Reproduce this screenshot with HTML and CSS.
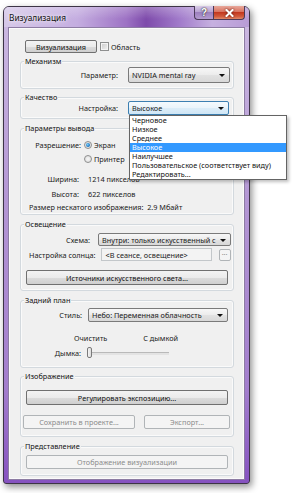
FILE: index.html
```html
<!DOCTYPE html>
<html lang="ru">
<head>
<meta charset="utf-8">
<link rel="stylesheet" href="styles.css">
</head>
<body>
<div class="window">
  <div class="titlebar">
    <span class="title">Визуализация</span>
    <div class="caption-btns">
      <div class="cbtn help">?</div>
      <div class="cbtn close"><svg width="9" height="8" viewBox="0 0 9 8"><path d="M1.5 1 L7.5 7 M7.5 1 L1.5 7" stroke="#fff" stroke-width="2" stroke-linecap="square"/></svg></div>
    </div>
  </div>
  <div class="client">
    <div class="toprow">
      <div class="btn btn-main">Визуализация</div>
      <span class="checkbox"></span><span class="cb-label">Область</span>
    </div>

    <div class="group g-mech">
      <div class="legend">Механизм</div>
      <div class="row r-param">
        <span class="lbl w98">Параметр:</span>
        <div class="combo c-param">NVIDIA mental ray<span class="arrow"></span></div>
      </div>
    </div>

    <div class="group g-qual">
      <div class="legend">Качество</div>
      <div class="row r-qual">
        <span class="lbl w98">Настройка:</span>
        <div class="combo focus c-qual">Высокое<span class="arrow"></span></div>
      </div>
    </div>

    <div class="group g-out">
      <div class="legend">Параметры вывода</div>
      <div class="row r-res">
        <span class="lbl w60">Разрешение:</span>
        <span class="radio on"></span><span>Экран</span>
      </div>
      <div class="row r-prn">
        <span class="lbl w60"></span>
        <span class="radio"></span><span>Принтер</span>
      </div>
      <div class="row r-w">
        <span class="lbl w59">Ширина:</span>
        <span class="val">1214 пикселов</span>
      </div>
      <div class="row r-h">
        <span class="lbl w59">Высота:</span>
        <span class="val">622 пикселов</span>
      </div>
      <div class="row r-size">
        <span class="size">Размер нескатого изображения:&nbsp; 2.9 Мбайт</span>
      </div>
    </div>

    <div class="group g-light">
      <div class="legend">Освещение</div>
      <div class="row r-scheme">
        <span class="lbl w70">Схема:</span>
        <div class="combo c-scheme">Внутри: только искусственный с<span class="arrow"></span></div>
      </div>
      <div class="row r-sun">
        <span class="lbl sunlbl">Настройка солнца:</span>
        <div class="field">&lt;В сеансе, освещение&gt;</div>
        <div class="btn dis dots">...</div>
      </div>
      <div class="btn wide r-lights">Источники искусственного света...</div>
    </div>

    <div class="group g-bg">
      <div class="legend">Задний план</div>
      <div class="row r-style">
        <span class="lbl w62">Стиль:</span>
        <div class="combo c-style">Небо: Переменная облачность<span class="arrow"></span></div>
      </div>
      <div class="row r-ticks">
        <span class="t1">Очистить</span><span class="t2">С дымкой</span>
      </div>
      <div class="row r-haze">
        <span class="lbl w61">Дымка:</span>
        <div class="slider"><span class="thumb"></span></div>
      </div>
    </div>

    <div class="group g-img">
      <div class="legend">Изображение</div>
      <div class="btn wide r-exp">Регулировать экспозицию...</div>
      <div class="row r-save">
        <div class="btn dis b-save">Сохранить в проекте...</div>
        <div class="btn dis b-export">Экспорт...</div>
      </div>
    </div>

    <div class="group g-view">
      <div class="legend">Представление</div>
      <div class="btn dis wide r-view">Отображение визуализации</div>
    </div>
  </div>

  <ul class="dropdown">
    <li>Черновое</li>
    <li>Низкое</li>
    <li>Среднее</li>
    <li class="sel">Высокое</li>
    <li>Наилучшее</li>
    <li>Пользовательское (соответствует виду)</li>
    <li>Редактировать...</li>
  </ul>
</div>
</body>
</html>
```

FILE: styles.css
```css
* { box-sizing: border-box; }
html, body { margin: 0; padding: 0; background: #fff; }
body {
  font-family: "Noto Sans", "DejaVu Sans", sans-serif;
  font-size: 7.3px;
  color: #1a1a1a;
  width: 296px;
  height: 493px;
  overflow: hidden;
}

.window {
  position: relative;
  margin: 6px 0 0 3px;
  width: 247px;
  height: 478px;
  border: 1px solid #3d3446;
  border-radius: 6px 6px 3px 3px;
  background: linear-gradient(180deg, #cdbbe2 0%, #b497d4 40%, #a37ecd 80%, #8652c0 100%);
  box-shadow: 2px 3px 7px rgba(0,0,0,0.45);
}

.titlebar {
  height: 20px;
  display: flex;
  align-items: flex-start;
  justify-content: space-between;
  padding-left: 5px;
  background:
    linear-gradient(180deg, rgba(255,255,255,0.25) 0%, rgba(255,255,255,0) 60%),
    linear-gradient(90deg, #d6c8e8 0%, #c4ade0 30%, #9d72c4 50%, #7e4bab 58%, #a27ccb 72%, #c6b0e0 85%, #b89cd6 100%);
  border-radius: 5px 5px 0 0;
}
.title {
  margin-top: 5px;
  font-size: 8.3px;
  color: #111;
  text-shadow: 0 0 6px rgba(255,255,255,0.9), 0 0 3px rgba(255,255,255,0.9);
}
.caption-btns {
  display: flex;
  margin-right: 4px;
  margin-top: -1px;
}
.cbtn {
  height: 14px;
  display: flex;
  align-items: center;
  justify-content: center;
  border: 1px solid #4a3a58;
  border-top: none;
}
.help {
  width: 19px;
  border-radius: 0 0 0 4px;
  border-right: none;
  background: linear-gradient(180deg, #d9cce8 0%, #b8a2d2 45%, #9d80be 50%, #b49cd0 100%);
  color: #fff;
  font: bold 10px "Liberation Sans", sans-serif;
  text-shadow: 0 0 2px #333, 0 0 1px #222;
}
.close {
  width: 32px;
  border-radius: 0 0 4px 0;
  background: linear-gradient(180deg, #e8a89c 0%, #d9735f 45%, #c3381f 50%, #d25a3c 80%, #e08a6a 100%);
}
.close svg { filter: drop-shadow(0 0 1px #5a1005); }

.client {
  margin: 0 4px;
  height: 453px;
  background: #f0f0f0;
  border: 1px solid #8d7ca3;
  box-shadow: inset 0 0 0 1px #fbfbfb;
  padding: 0 10px 0 11px;
  display: flex;
  flex-direction: column;
}

.toprow {
  display: flex;
  align-items: center;
  margin: 12px 0 0 5px;
  height: 13px;
}
.btn {
  border: 1px solid #707070;
  border-radius: 2px;
  background: linear-gradient(180deg, #f3f3f3 0%, #ebebeb 50%, #dcdcdc 52%, #cfcfcf 100%);
  display: flex;
  align-items: center;
  justify-content: center;
  color: #111;
  white-space: nowrap;
}
.btn.dis {
  border-color: #b0b4b7;
  background: #f4f4f4;
  color: #8c8c8c;
}
.btn-main { width: 72px; height: 13px; }
.checkbox {
  width: 9px; height: 9px;
  margin-left: 3px;
  border: 1px solid #8e8f8f;
  background: linear-gradient(135deg, #c9c9c9 0%, #e2e2e2 60%, #f2f2f2 100%);
  box-shadow: inset 0 0 0 1px #f4f4f4;
}
.cb-label { margin-left: 2px; }

.group {
  border: 1px solid #d3d9de;
  border-radius: 3px;
  box-shadow: inset 0 0 0 1px #fafafa;
  display: flex;
  flex-direction: column;
  flex: none;
}
.legend {
  align-self: flex-start;
  height: 11px;
  line-height: 11px;
  margin: -6px 0 -5px 3px;
  padding: 0 1px;
  background: #f0f0f0;
  color: #111;
}
.row { display: flex; align-items: center; flex: none; }
.lbl { text-align: right; flex: none; white-space: nowrap; }
.w98 { width: 97px; margin-right: 10px; }
.w60 { width: 60px; margin-right: 3px; }
.w59 { width: 58px; margin-right: 9px; }
.w70 { width: 69px; margin-right: 8px; }
.w62 { width: 61px; margin-right: 6px; }
.w61 { width: 60px; margin-right: 6px; }

.combo {
  position: relative;
  border: 1px solid #7a7a7a;
  border-radius: 2px;
  background: linear-gradient(180deg, #f7f7f7 0%, #ececec 50%, #e2e2e2 52%, #d8d8d8 100%);
  padding-left: 3px;
  display: flex;
  align-items: center;
  white-space: nowrap;
  overflow: hidden;
}
.combo.focus {
  border-color: #3c7fb1;
  background: linear-gradient(180deg, #f4fafe 0%, #eaf4fb 50%, #dcedf8 52%, #cfe6f6 100%);
}
.arrow {
  position: absolute;
  right: 4px;
  top: 50%;
  margin-top: -1px;
  border-left: 3px solid transparent;
  border-right: 3px solid transparent;
  border-top: 3px solid #111;
}

.g-mech { margin-top: 8px; height: 28px; }
.r-param { margin-top: 5px; }
.c-param { width: 102px; height: 16px; }

.g-qual { margin-top: 8px; height: 22px; }
.r-qual { margin-top: 3px; }
.c-qual { width: 101px; height: 14px; }

.g-out { margin-top: 9px; height: 87px; }
.r-res { margin-top: 10px; height: 11px; }
.r-prn { margin-top: 3px; height: 11px; }
.r-w { margin-top: 9px; height: 11px; }
.r-h { margin-top: 4px; height: 11px; }
.r-size { margin-top: 2px; height: 11px; padding-left: 8px; }
.radio {
  width: 8px; height: 8px;
  border-radius: 50%;
  border: 1px solid #8e8f8f;
  background: radial-gradient(circle, #f7f7f7 0%, #d9d9d9 100%);
  margin-right: 2px;
  position: relative;
}
.radio.on::after {
  content: "";
  position: absolute;
  left: 1px; top: 1px;
  width: 4px; height: 4px;
  border-radius: 50%;
  background: radial-gradient(circle at 40% 40%, #7fd0f7 0%, #1e7bc8 60%, #0d4f92 100%);
}

.g-light { margin-top: 9px; height: 67px; }
.r-scheme { margin-top: 8px; }
.c-scheme { width: 133px; height: 13px; }
.r-sun { margin-top: 2px; }
.sunlbl { margin-left: 8px; margin-right: 5px; }
.field {
  width: 111px; height: 13px;
  border: 1px solid #c3c7ca;
  background: #f3f3f3;
  padding-left: 4px;
  display: flex; align-items: center;
  color: #222;
}
.dots { width: 12px; height: 12px; margin-left: 7px; line-height: 1; padding-bottom: 3px; }
.wide { width: 202px; margin-left: 5px; height: 15px; }
.r-lights { margin-top: 9px; }

.g-bg { margin-top: 9px; height: 68px; }
.r-style { margin-top: 7px; }
.c-style { width: 140px; height: 14px; }
.r-ticks { margin-top: 10px; height: 11px; }
.t1 { margin-left: 53px; }
.t2 { margin-left: 36px; }
.r-haze { margin-top: 4px; height: 11px; }
.slider {
  position: relative;
  width: 82px;
  height: 11px;
}
.slider::before {
  content: "";
  position: absolute;
  left: 1px; right: 0; top: 5px;
  height: 2px;
  background: #e3e3e3;
  border-top: 1px solid #b9b9b9;
}
.thumb {
  position: absolute;
  left: 0; top: 0;
  width: 5px; height: 11px;
  border: 1px solid #7a7a7a;
  border-radius: 2px;
  background: linear-gradient(90deg, #f5f5f5, #dcdcdc);
}

.g-img { margin-top: 8px; height: 61px; }
.r-exp { margin-top: 13px; }
.r-save { margin-top: 10px; }
.b-save { width: 112px; height: 14px; margin-left: 2px; }
.b-export { width: 86px; height: 14px; margin-left: 9px; }

.g-view { margin-top: 9px; height: 30px; }
.r-view { margin-top: 8px; height: 14px; }

.dropdown {
  position: absolute;
  left: 125px;
  top: 108px;
  width: 158px;
  margin: 0;
  padding: 0;
  list-style: none;
  background: #fff;
  border: 1px solid #646464;
  box-shadow: 2px 2px 3px rgba(0,0,0,0.25);
}
.dropdown li {
  height: 9px;
  line-height: 9px;
  padding-left: 2px;
  white-space: nowrap;
  color: #111;
}
.dropdown li.sel { background: #3399ff; color: #fff; }
```
